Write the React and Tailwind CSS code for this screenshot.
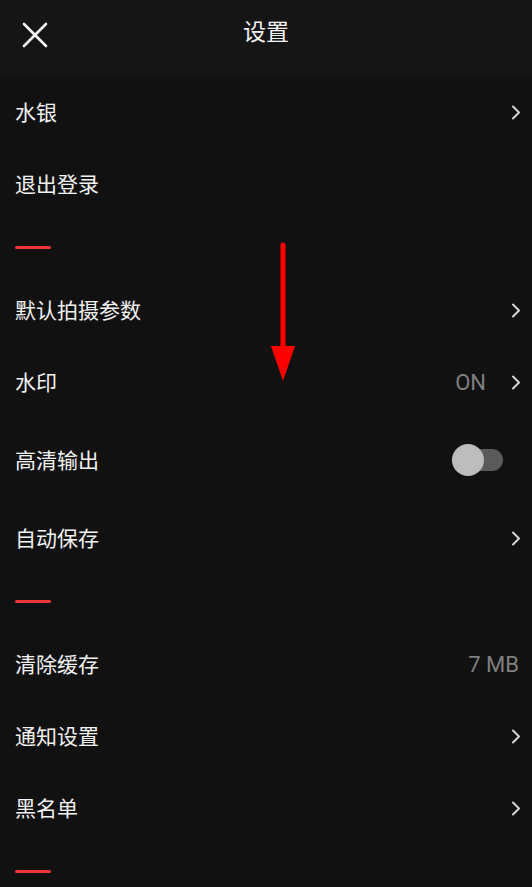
import React from "react";

const Chevron = () => (
  <svg width="10" height="15" viewBox="0 0 10 15" className="ml-[25px]">
    <path d="M2 1.5 L8 7.5 L2 13.5" fill="none" stroke="#d6d6d6" strokeWidth="2" strokeLinecap="round" strokeLinejoin="round" />
  </svg>
);

const Row = ({ label, value, chevron, toggle, tall }) => (
  <div className={`flex items-center justify-between pl-[15px] pr-[11px] ${tall ? "h-[84px]" : "h-[72px]"}`}>
    <span className="text-[21px] text-[#f2f2f2]">{label}</span>
    <div className="flex items-center">
      {value && (
        <span
          className={`text-[22px] text-[#7f7f7f] ${chevron ? "" : "mr-[2px]"}`}
          style={{ fontFamily: 'Roboto, "Noto Sans", sans-serif' }}
        >
          {value}
        </span>
      )}
      {chevron && <Chevron />}
      {toggle && (
        <div className="relative mr-[18px] w-[51px] h-[22px] rounded-full bg-[#5a5a5a]">
          <div className="absolute left-0 top-[-5px] w-[32px] h-[32px] rounded-full bg-[#bdbdbd]" />
        </div>
      )}
    </div>
  </div>
);

const Divider = () => (
  <div className="h-[54px] flex items-center pl-[15px]">
    <div className="w-[36px] h-[3px] rounded-full bg-[#f0353b]" />
  </div>
);

export default function App() {
  return (
    <div
      className="relative w-[532px] h-[887px] overflow-hidden bg-[#111111]"
      style={{ fontFamily: '"Noto Sans CJK SC", "Noto Sans", sans-serif' }}
    >
      <div className="relative h-[76px] bg-[#151515] flex items-center justify-center">
        <svg width="26" height="26" viewBox="0 0 26 26" className="absolute left-[22px] top-[22px]">
          <path d="M2 2 L24 24 M24 2 L2 24" stroke="#f5f5f5" strokeWidth="2.6" strokeLinecap="round" />
        </svg>
        <span className="text-[23px] text-[#f2f2f2] mt-[-16px]">设置</span>
      </div>
      <Row label="水银" chevron />
      <Row label="退出登录" />
      <Divider />
      <Row label="默认拍摄参数" chevron />
      <Row label="水印" value="ON" chevron />
      <Row label="高清输出" toggle tall />
      <Row label="自动保存" chevron />
      <Divider />
      <Row label="清除缓存" value="7 MB" />
      <Row label="通知设置" chevron />
      <Row label="黑名单" chevron />
      <Divider />
      <svg width="30" height="145" viewBox="0 0 30 145" className="absolute left-[268px] top-[240px]">
        <path d="M15 5 L15 108" stroke="#ff0000" strokeWidth="5" strokeLinecap="round" />
        <path d="M3 106 L27 106 L15 141 Z" fill="#ff0000" />
      </svg>
    </div>
  );
}
